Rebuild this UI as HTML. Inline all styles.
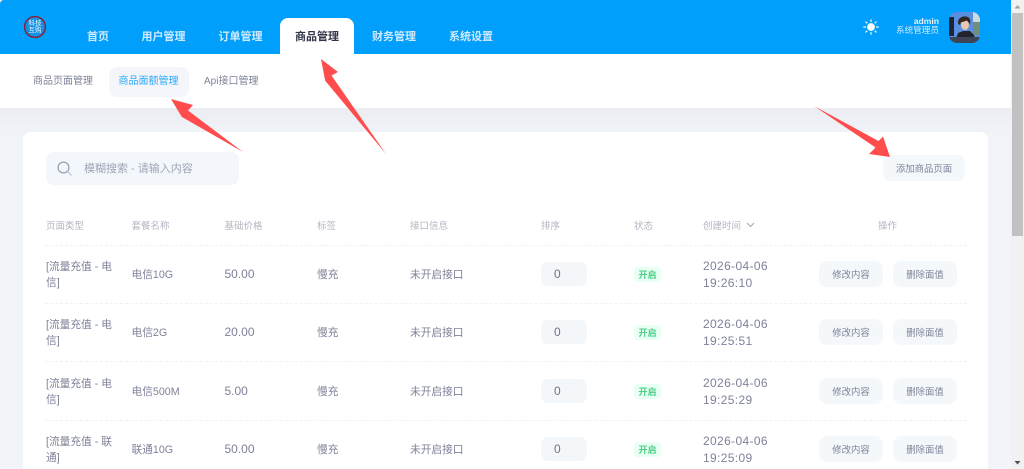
<!DOCTYPE html>
<html lang="zh">
<head>
<meta charset="utf-8">
<title>商品面额管理</title>
<style>
*{box-sizing:border-box;margin:0;padding:0}
html,body{width:1024px;height:469px;overflow:hidden;background:#f1f4f8;font-family:"Liberation Sans","Noto Sans CJK SC",sans-serif}
#w{position:absolute;left:0;top:0;width:1024px;height:469px;overflow:hidden;background:#f1f4f8;filter:blur(.3px)}
.a{position:absolute;white-space:nowrap}
#top{position:absolute;left:0;top:0;width:1012px;height:54px;background:#009ffb;border-top-left-radius:4px}
#sub{position:absolute;left:0;top:54px;width:1012px;height:54px;background:#fff}
#grad{position:absolute;left:0;top:108px;width:1012px;height:30px;background:linear-gradient(#ebedf2,#f1f4f8)}
.n{top:30px;font-size:11px;line-height:14px;font-weight:700;color:#cfeaff}
#tab{position:absolute;left:280px;top:18px;width:74px;height:36px;background:#fff;border-radius:8px 8px 0 0}
#card{position:absolute;left:23px;top:132px;width:965px;height:337px;background:#fff;border-radius:8px 8px 0 0}
.h{top:220.5px;font-size:9.5px;line-height:12px;color:#b5b5c3}
.l{position:absolute;left:45px;width:922px;border-top:1px dashed #eff2f5}
.row{position:absolute;left:0;width:1012px;height:48px}
.t{font-size:10.7px;line-height:16.5px;color:#7e8299;position:absolute;white-space:nowrap}
.d{letter-spacing:.35px;font-size:12px}
.p{font-size:12px}
.inp{position:absolute;left:541px;top:16px;width:46px;height:24px;border-radius:7px;background:#f4f7fa;font-size:12px;line-height:24px;padding-left:13px;color:#6f7285}
.tag{position:absolute;left:634px;top:21px;width:27px;height:15px;border-radius:4px;background:#e8fff3;color:#50cd89;font-size:9px;line-height:15px;padding-top:.5px;font-weight:700;text-align:center}
.btn{position:absolute;top:15px;height:26px;border-radius:8px;background:#f5f8fa;color:#7e8299;font-size:9.4px;line-height:26px;padding-top:1px;text-align:center}
</style>
</head>
<body>
<div id="w">
<div id="top"></div>
<div id="sub"></div>
<div id="grad"></div>

<svg class="a" style="left:23px;top:15px" width="24" height="24" viewBox="0 0 24 24"><circle cx="12" cy="12" r="10.4" fill="#1590e0" stroke="#8e1b2f" stroke-width="1.4"/></svg>
<div class="a" style="left:27px;top:19.5px;width:16px;text-align:center;font-size:6.5px;line-height:7.5px;color:#f0f9ff">科技<br>互购</div>

<div class="a n" style="left:87px">首页</div>
<div class="a n" style="left:141.5px">用户管理</div>
<div class="a n" style="left:218.5px">订单管理</div>
<div id="tab"></div>
<div class="a n" style="left:295px;color:#33364a">商品管理</div>
<div class="a n" style="left:372px">财务管理</div>
<div class="a n" style="left:449px">系统设置</div>

<svg class="a" style="left:863px;top:19px" width="16" height="16" viewBox="0 0 16 16"><circle cx="8" cy="8" r="3.9" fill="#fff"/><g stroke="#fff" stroke-width="1.2" stroke-linecap="round"><path d="M8 .8v1.6M8 13.6v1.6M.8 8h1.6M13.6 8h1.6M2.9 2.9l1.1 1.1M12 12l1.1 1.1M2.9 13.1L4 12M12 4l1.1-1.1"/></g></svg>
<div class="a" style="right:85px;top:15.5px;font-size:8.6px;line-height:10px;font-weight:700;color:#e3f4ff">admin</div>
<div class="a" style="right:85px;top:25px;font-size:8.6px;line-height:10px;color:#cfeaff">系统管理员</div>
<svg class="a" style="left:949px;top:12px" width="31" height="31" viewBox="0 0 31 31"><defs><clipPath id="c"><rect width="31" height="31" rx="8"/></clipPath></defs><g clip-path="url(#c)"><rect width="31" height="31" fill="#5a8fe0"/><rect x="24" y="0" width="7" height="10" fill="#c9dbe0"/><rect x="24" y="10" width="7" height="13" fill="#6f8f78"/><rect x="0" y="5" width="5" height="19" fill="#1d2433"/><path d="M7 27l2-6 5-2h7l4 4 1 4z" fill="#23232b"/><ellipse cx="16" cy="13" rx="4" ry="5" fill="#e9c6ae"/><path d="M9 11c0-5 4-7 8-6.500 4 .5 5 4 4 8-1-2-2-3.500-4-4-2 1.500-4 1.500-5 1.500l-1 3c-1-.5-2-1-2-2z" fill="#33261f"/><rect x="0" y="25" width="31" height="6" fill="#3d4453"/></g></svg>

<div class="a" style="left:33px;top:75.5px;font-size:10px;line-height:12px;color:#7e8299">商品页面管理</div>
<div class="a" style="left:109px;top:66.5px;width:80px;height:30px;border-radius:8px;background:#f4f6fb"></div>
<div class="a" style="left:118.5px;top:75.5px;font-size:10px;line-height:12px;color:#29a9f9">商品面额管理</div>
<div class="a" style="left:204px;top:75.5px;font-size:10px;line-height:12px;color:#7e8299">Api接口管理</div>

<div id="card"></div>

<div class="a" style="left:45.5px;top:152px;width:193.5px;height:33px;border-radius:8px;background:#f3f6fa"></div>
<svg class="a" style="left:56px;top:160px" width="17" height="17" viewBox="0 0 17 17"><circle cx="7.5" cy="7.5" r="5.4" fill="none" stroke="#9a9db0" stroke-width="1.2"/><path d="M11.6 11.6l3.6 3.6" stroke="#c4c6d2" stroke-width="1.2" stroke-linecap="round"/></svg>
<div class="a" style="left:84px;top:163px;font-size:11px;line-height:12px;color:#a1a5b7">模糊搜索 - 请输入内容</div>

<div class="a" style="left:883px;top:155px;width:82px;height:26px;border-radius:8px;background:#f5f8fa;color:#7e8299;font-size:9.4px;line-height:26px;padding-top:1px;text-align:center">添加商品页面</div>

<div class="a h" style="left:46px">页面类型</div>
<div class="a h" style="left:131.5px">套餐名称</div>
<div class="a h" style="left:224.5px">基础价格</div>
<div class="a h" style="left:317px">标签</div>
<div class="a h" style="left:410px">接口信息</div>
<div class="a h" style="left:541px">排序</div>
<div class="a h" style="left:634px">状态</div>
<div class="a h" style="left:703px">创建时间</div>
<svg class="a" style="left:746px;top:222px" width="9" height="6" viewBox="0 0 9 6"><path d="M1 1l3.500 3.500L8 1" fill="none" stroke="#a1a5b7" stroke-width="1"/></svg>
<div class="a h" style="left:878px">操作</div>

<div class="l" style="top:245px"></div>
<div class="l" style="top:303px"></div>
<div class="l" style="top:361px"></div>
<div class="l" style="top:420px"></div>

<div class="row" style="top:246px">
<div class="t" style="left:46px;top:12.500px">[流量充值 - 电<br>信]</div>
<div class="t" style="left:131.5px;top:20.500px">电信10G</div>
<div class="t p" style="left:224.5px;top:20px">50.00</div>
<div class="t" style="left:317px;top:20.500px">慢充</div>
<div class="t" style="left:410px;top:20.500px">未开启接口</div>
<div class="inp">0</div><div class="tag">开启</div>
<div class="t d" style="left:703px;top:12px">2026-04-06<br>19:26:10</div>
<div class="btn" style="left:819px;width:64px">修改内容</div><div class="btn" style="left:893px;width:64px">删除面值</div>
</div>

<div class="row" style="top:304px">
<div class="t" style="left:46px;top:12.500px">[流量充值 - 电<br>信]</div>
<div class="t" style="left:131.5px;top:20.500px">电信2G</div>
<div class="t p" style="left:224.5px;top:20px">20.00</div>
<div class="t" style="left:317px;top:20.500px">慢充</div>
<div class="t" style="left:410px;top:20.500px">未开启接口</div>
<div class="inp">0</div><div class="tag">开启</div>
<div class="t d" style="left:703px;top:12px">2026-04-06<br>19:25:51</div>
<div class="btn" style="left:819px;width:64px">修改内容</div><div class="btn" style="left:893px;width:64px">删除面值</div>
</div>

<div class="row" style="top:363px">
<div class="t" style="left:46px;top:12.500px">[流量充值 - 电<br>信]</div>
<div class="t" style="left:131.5px;top:20.500px">电信500M</div>
<div class="t p" style="left:224.5px;top:20px">5.00</div>
<div class="t" style="left:317px;top:20.500px">慢充</div>
<div class="t" style="left:410px;top:20.500px">未开启接口</div>
<div class="inp">0</div><div class="tag">开启</div>
<div class="t d" style="left:703px;top:12px">2026-04-06<br>19:25:29</div>
<div class="btn" style="left:819px;width:64px">修改内容</div><div class="btn" style="left:893px;width:64px">删除面值</div>
</div>

<div class="row" style="top:421px">
<div class="t" style="left:46px;top:12.500px">[流量充值 - 联<br>通]</div>
<div class="t" style="left:131.5px;top:20.500px">联通10G</div>
<div class="t p" style="left:224.5px;top:20px">50.00</div>
<div class="t" style="left:317px;top:20.500px">慢充</div>
<div class="t" style="left:410px;top:20.500px">未开启接口</div>
<div class="inp">0</div><div class="tag">开启</div>
<div class="t d" style="left:703px;top:12px">2026-04-06<br>19:25:09</div>
<div class="btn" style="left:819px;width:64px">修改内容</div><div class="btn" style="left:893px;width:64px">删除面值</div>
</div>

<svg class="a" style="left:0;top:0" width="1012" height="469" viewBox="0 0 1012 469">
<g fill="#ff4d4d">
<path d="M321 59L338 72L331.5 75.5L386 154L325 80.5L325 80L321 59Z"/>
<path d="M171 99L193 105L188 110.5L243 152L182 117L181.5 116.5L171 99Z"/>
<path d="M890 157L869 154L875.5 147.5L814 106L878.5 141L883 136.5L890 157Z"/>
</g>
</svg>

<div class="a" style="left:1011px;top:0;width:13px;height:469px;background:#f1f1f1"></div>
<div class="a" style="left:1012px;top:13px;width:11px;height:223px;background:#c1c1c1"></div>
<svg class="a" style="left:1011px;top:0" width="13" height="469" viewBox="0 0 13 469"><path d="M6.500 5l3 3.500h-6z" fill="#a3a3a3"/><path d="M6.500 464.500l3-3.500h-6z" fill="#505050"/></svg>
</div>
</body>
</html>
